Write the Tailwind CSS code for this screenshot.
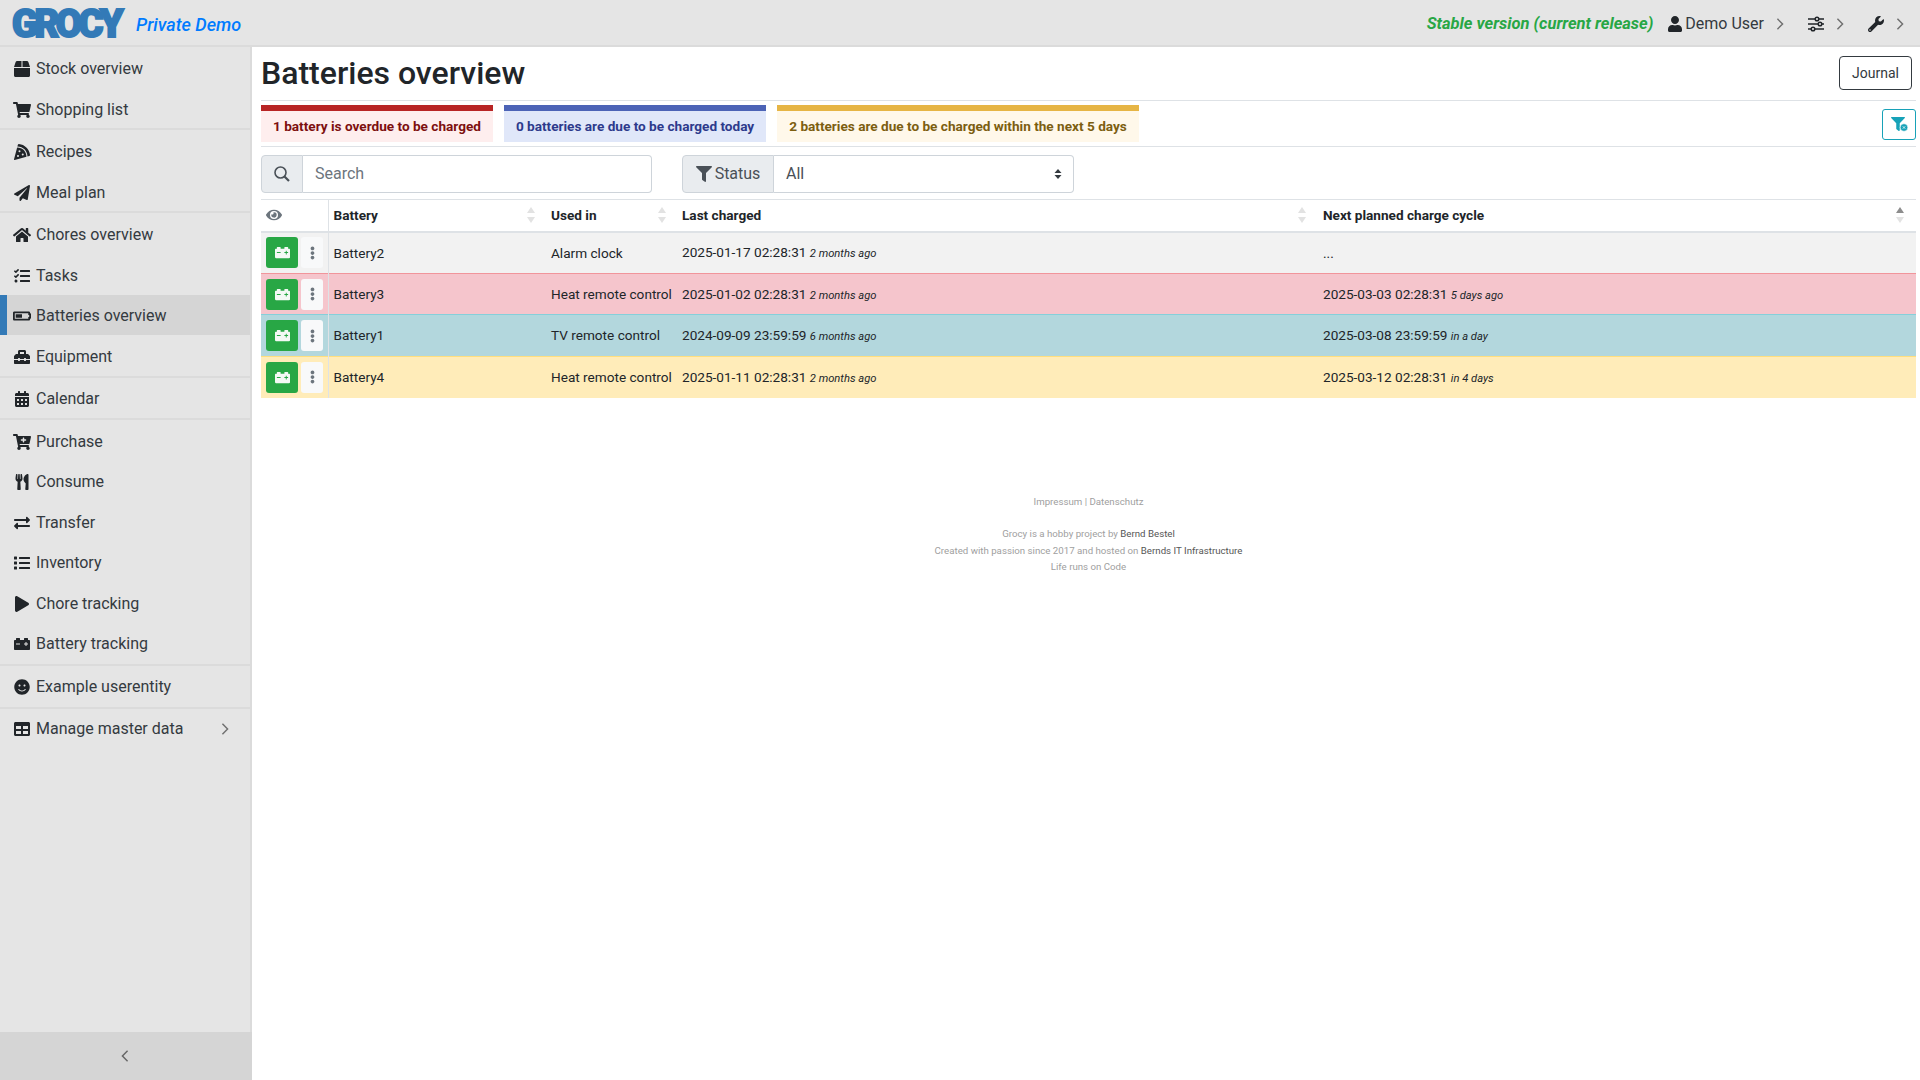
<!DOCTYPE html>
<html lang="en">
<head>
  <meta charset="UTF-8" />
  <title>Grocy - Batteries overview</title>
  <script src="https://cdn.jsdelivr.net/npm/@tailwindcss/browser@4"></script>
</head>
<body class="bg-white text-[#212529] overflow-hidden font-['Roboto',sans-serif]">

  <!-- icon sprite -->
  <svg class="hidden">
    <symbol id="i-box" viewBox="0 0 512 512"><path fill="currentColor" d="M509.5 184.6L458.9 32.8C452.4 13.2 434.1 0 413.4 0H272v192h238.7c-.4-2.5-.4-5-1.2-7.4zM240 0H98.6c-20.7 0-39 13.2-45.5 32.8L2.5 184.6c-.8 2.4-.8 4.9-1.2 7.4H240V0zM0 224v240c0 26.5 21.5 48 48 48h416c26.5 0 48-21.5 48-48V224H0z"/></symbol>
    <symbol id="i-cart" viewBox="0 0 576 512"><path fill="currentColor" d="M528.12 301.319l47.273-208C578.806 78.301 567.391 64 551.99 64H159.208l-9.166-44.81C147.758 8.021 137.93 0 126.529 0H24C10.745 0 0 10.745 0 24v16c0 13.255 10.745 24 24 24h69.883l70.248 343.435C147.325 417.1 136 435.222 136 456c0 30.928 25.072 56 56 56s56-25.072 56-56c0-15.674-6.447-29.835-16.824-40h209.647C430.447 426.165 424 440.326 424 456c0 30.928 25.072 56 56 56s56-25.072 56-56c0-22.172-12.888-41.332-31.579-50.405l5.517-24.276c3.413-15.018-8.002-29.319-23.403-29.319H218.117l-6.545-32h293.145c11.206 0 20.92-7.754 23.403-18.681z"/></symbol>
    <symbol id="i-pizza" viewBox="0 0 512 512"><path fill="currentColor" d="M158.87.15c-16.16-1.52-31.2 8.42-35.33 24.12l-14.81 56.27c187.62 5.49 314.54 130.61 322.48 317l56.94-15.78c15.72-4.36 25.49-19.68 23.62-35.9C490.89 165.08 340.78 17.32 158.87.15zm-58.47 112L.55 491.64a16.21 16.21 0 0 0 20 19.75l379-105.1c-4.27-174.89-123.08-292.14-299.15-294.1zM128 416a32 32 0 1 1 32-32 32 32 0 0 1-32 32zm48-152a32 32 0 1 1 32-32 32 32 0 0 1-32 32zm104 104a32 32 0 1 1 32-32 32 32 0 0 1-32 32z"/></symbol>
    <symbol id="i-plane" viewBox="0 0 512 512"><path fill="currentColor" d="M476 3.2L12.5 270.6c-18.1 10.4-15.8 35.6 2.2 43.2L121 358.4l287.3-253.2c5.5-4.9 13.3 2.6 8.6 8.3L176 407v80.5c0 23.6 28.5 32.9 42.5 15.8L282 426l124.6 52.2c14.2 6 30.4-2.9 33-18.2l72-432C515 7.8 493.3-6.8 476 3.2z"/></symbol>
    <symbol id="i-home" viewBox="0 0 576 512"><path fill="currentColor" d="M280.37 148.26L96 300.11V464a16 16 0 0 0 16 16l112.06-.29a16 16 0 0 0 15.92-16V368a16 16 0 0 1 16-16h64a16 16 0 0 1 16 16v95.64a16 16 0 0 0 16 16.05L464 480a16 16 0 0 0 16-16V300L295.67 148.26a12.19 12.19 0 0 0-15.3 0zM571.6 251.47L488 182.56V44.05a12 12 0 0 0-12-12h-56a12 12 0 0 0-12 12v72.61L318.47 43a48 48 0 0 0-61 0L4.34 251.47a12 12 0 0 0-1.6 16.9l25.5 31A12 12 0 0 0 45.15 301l235.22-193.74a12.19 12.19 0 0 1 15.3 0L530.9 301a12 12 0 0 0 16.9-1.6l25.5-31a12 12 0 0 0-1.7-16.93z"/></symbol>
    <symbol id="i-tasks" viewBox="0 0 512 512"><path fill="currentColor" d="M139.61 35.5a12 12 0 0 0-17 0L58.93 98.81l-22.7-22.12a12 12 0 0 0-17 0L3.53 92.41a12 12 0 0 0 0 17l47.59 47.4a12.78 12.78 0 0 0 17.61 0l15.59-15.62L156.52 69a12.09 12.09 0 0 0 .09-17zm0 159.19a12 12 0 0 0-17 0l-63.68 63.72-22.7-22.1a12 12 0 0 0-17 0L3.53 252a12 12 0 0 0 0 17L51 316.5a12.77 12.77 0 0 0 17.6 0l15.7-15.69 72.2-72.22a12 12 0 0 0 .09-16.9zM64 368c-26.49 0-48.59 21.5-48.59 48S37.53 464 64 464a48 48 0 0 0 0-96zm432 16H208a16 16 0 0 0-16 16v32a16 16 0 0 0 16 16h288a16 16 0 0 0 16-16v-32a16 16 0 0 0-16-16zm0-320H208a16 16 0 0 0-16 16v32a16 16 0 0 0 16 16h288a16 16 0 0 0 16-16V80a16 16 0 0 0-16-16zm0 160H208a16 16 0 0 0-16 16v32a16 16 0 0 0 16 16h288a16 16 0 0 0 16-16v-32a16 16 0 0 0-16-16z"/></symbol>
    <symbol id="i-battery-half" viewBox="0 0 640 512"><path fill="currentColor" d="M544 160v64h32v64h-32v64H64V160h480m16-64H48c-26.51 0-48 21.49-48 48v224c0 26.51 21.49 48 48 48h512c26.51 0 48-21.49 48-48v-16h8c13.255 0 24-10.745 24-24V184c0-13.255-10.745-24-24-24h-8v-16c0-26.51-21.49-48-48-48zm-240 96H96v128h224V192z"/></symbol>
    <symbol id="i-toolbox" viewBox="0 0 512 512"><path fill="currentColor" d="M502.63 214.63l-45.25-45.25c-6-6-14.14-9.37-22.63-9.37H384V80c0-26.51-21.49-48-48-48H176c-26.51 0-48 21.49-48 48v80H77.25c-8.49 0-16.62 3.37-22.63 9.37L9.37 214.63c-6 6-9.37 14.14-9.37 22.63V320h128v-16c0-8.84 7.16-16 16-16h32c8.84 0 16 7.16 16 16v16h128v-16c0-8.84 7.16-16 16-16h32c8.84 0 16 7.16 16 16v16h128v-82.75c0-8.48-3.37-16.62-9.37-22.62zM320 160H192V96h128v64zm64 208c0 8.84-7.16 16-16 16h-32c-8.84 0-16-7.16-16-16v-16H192v16c0 8.84-7.16 16-16 16h-32c-8.84 0-16-7.16-16-16v-16H0v96c0 17.67 14.33 32 32 32h448c17.67 0 32-14.33 32-32v-96H384v16z"/></symbol>
    <symbol id="i-calendar" viewBox="0 0 448 512"><path fill="currentColor" d="M0 464c0 26.5 21.5 48 48 48h352c26.5 0 48-21.5 48-48V192H0v272zm320-196c0-6.6 5.4-12 12-12h40c6.6 0 12 5.4 12 12v40c0 6.6-5.4 12-12 12h-40c-6.6 0-12-5.4-12-12v-40zm0 128c0-6.6 5.4-12 12-12h40c6.6 0 12 5.4 12 12v40c0 6.6-5.4 12-12 12h-40c-6.6 0-12-5.4-12-12v-40zM192 268c0-6.6 5.4-12 12-12h40c6.6 0 12 5.4 12 12v40c0 6.6-5.4 12-12 12h-40c-6.6 0-12-5.4-12-12v-40zm0 128c0-6.6 5.4-12 12-12h40c6.6 0 12 5.4 12 12v40c0 6.6-5.4 12-12 12h-40c-6.6 0-12-5.4-12-12v-40zM64 268c0-6.6 5.4-12 12-12h40c6.6 0 12 5.4 12 12v40c0 6.6-5.4 12-12 12H76c-6.6 0-12-5.4-12-12v-40zm0 128c0-6.6 5.4-12 12-12h40c6.6 0 12 5.4 12 12v40c0 6.6-5.4 12-12 12H76c-6.6 0-12-5.4-12-12v-40zM400 64h-48V16c0-8.8-7.2-16-16-16h-32c-8.8 0-16 7.2-16 16v48H160V16c0-8.8-7.2-16-16-16h-32c-8.8 0-16 7.2-16 16v48H48C21.5 64 0 85.5 0 112v48h448v-48c0-26.5-21.5-48-48-48z"/></symbol>
    <symbol id="i-cart-plus" viewBox="0 0 576 512"><path fill="currentColor" d="M504.717 320H211.572l6.545 32h268.418c15.401 0 26.816 14.301 23.403 29.319l-5.517 24.276C523.112 414.668 536 433.828 536 456c0 31.202-25.519 56.444-56.824 55.994-29.823-.429-54.35-24.631-55.155-54.447-.44-16.287 6.085-31.049 16.803-41.548H231.176C241.553 426.165 248 440.326 248 456c0 31.813-26.528 57.431-58.67 55.938-28.54-1.325-51.751-24.385-53.251-52.917-1.158-22.034 10.436-41.455 28.051-51.586L93.883 64H24C10.745 64 0 53.255 0 40V24C0 10.745 10.745 0 24 0h102.529c11.401 0 21.228 8.021 23.513 19.19L159.208 64H551.99c15.401 0 26.816 14.301 23.403 29.319l-47.273 208C525.637 312.246 515.923 320 504.717 320zM408 168h-48v-40c0-8.837-7.163-16-16-16h-16c-8.837 0-16 7.163-16 16v40h-48c-8.837 0-16 7.163-16 16v16c0 8.837 7.163 16 16 16h48v40c0 8.837 7.163 16 16 16h16c8.837 0 16-7.163 16-16v-40h48c8.837 0 16-7.163 16-16v-16c0-8.837-7.163-16-16-16z"/></symbol>
    <symbol id="i-utensils" viewBox="0 0 416 512"><path fill="currentColor" d="M207.9 15.2c.8 4.7 16.1 94.5 16.1 128.8 0 52.3-27.8 89.6-68.9 104.6L168 486.7c.7 13.7-10.2 25.3-24 25.3H80c-13.7 0-24.7-11.5-24-25.3l12.9-238.1C27.7 233.6 0 196.2 0 144 0 109.6 15.3 19.9 16.1 15.2 19.3-5.1 61.4-5.4 64 16.3v141.2c1.3 3.4 15.1 3.2 16 0 1.4-25.3 7.9-139.2 8-141.8 3.3-20.8 44.7-20.8 47.9 0 .2 2.7 6.6 116.5 8 141.8.9 3.2 14.8 3.4 16 0V16.3c2.6-21.6 44.8-21.4 48-1.1zm119.2 285.7l-15 185.1c-1.2 14 9.9 26 23.9 26h56c13.3 0 24-10.7 24-24V24c0-13.2-10.7-24-24-24-82.5 0-221.4 178.5-64.9 300.9z"/></symbol>
    <symbol id="i-exchange" viewBox="0 0 512 512"><path fill="currentColor" d="M0 168v-16c0-13.255 10.745-24 24-24h360V80c0-21.367 25.899-32.042 40.971-16.971l80 80c9.372 9.373 9.372 24.569 0 33.941l-80 80C409.956 271.982 384 261.456 384 240v-48H24c-13.255 0-24-10.745-24-24zm488 152H128v-48c0-21.314-25.862-32.08-40.971-16.971l-80 80c-9.372 9.373-9.372 24.569 0 33.941l80 80C102.057 463.997 128 453.437 128 432v-48h360c13.255 0 24-10.745 24-24v-16c0-13.255-10.745-24-24-24z"/></symbol>
    <symbol id="i-list" viewBox="0 0 512 512"><path fill="currentColor" d="M80 368H16a16 16 0 0 0-16 16v64a16 16 0 0 0 16 16h64a16 16 0 0 0 16-16v-64a16 16 0 0 0-16-16zm0-320H16A16 16 0 0 0 0 64v64a16 16 0 0 0 16 16h64a16 16 0 0 0 16-16V64a16 16 0 0 0-16-16zm0 160H16a16 16 0 0 0-16 16v64a16 16 0 0 0 16 16h64a16 16 0 0 0 16-16v-64a16 16 0 0 0-16-16zm416 176H176a16 16 0 0 0-16 16v32a16 16 0 0 0 16 16h320a16 16 0 0 0 16-16v-32a16 16 0 0 0-16-16zm0-320H176a16 16 0 0 0-16 16v32a16 16 0 0 0 16 16h320a16 16 0 0 0 16-16V80a16 16 0 0 0-16-16zm0 160H176a16 16 0 0 0-16 16v32a16 16 0 0 0 16 16h320a16 16 0 0 0 16-16v-32a16 16 0 0 0-16-16z"/></symbol>
    <symbol id="i-play" viewBox="0 0 448 512"><path fill="currentColor" d="M424.4 214.7L72.4 6.6C43.8-10.3 0 6.1 0 47.9V464c0 37.5 40.7 60.1 72.4 41.3l352-208c31.4-18.5 31.5-64.1 0-82.6z"/></symbol>
    <symbol id="i-car-battery" viewBox="0 0 512 512"><path fill="currentColor" d="M480 128h-32V80c0-8.84-7.16-16-16-16h-96c-8.84 0-16 7.16-16 16v48H192V80c0-8.84-7.16-16-16-16H80c-8.84 0-16 7.16-16 16v48H32c-17.67 0-32 14.33-32 32v256c0 17.67 14.33 32 32 32h448c17.67 0 32-14.33 32-32V160c0-17.67-14.33-32-32-32zM192 264c0 4.42-3.58 8-8 8H72c-4.42 0-8-3.58-8-8v-16c0-4.42 3.58-8 8-8h112c4.42 0 8 3.58 8 8v16zm256 0c0 4.42-3.58 8-8 8h-40v40c0 4.42-3.58 8-8 8h-16c-4.42 0-8-3.58-8-8v-40h-40c-4.42 0-8-3.58-8-8v-16c0-4.42 3.58-8 8-8h40v-40c0-4.42 3.58-8 8-8h16c4.42 0 8 3.58 8 8v40h40c4.42 0 8 3.58 8 8v16z"/></symbol>
    <symbol id="i-smile" viewBox="0 0 496 512"><path fill="currentColor" d="M248 8C111 8 0 119 0 256s111 248 248 248 248-111 248-248S385 8 248 8zm80 168c17.7 0 32 14.3 32 32s-14.3 32-32 32-32-14.3-32-32 14.3-32 32-32zm-160 0c17.7 0 32 14.3 32 32s-14.3 32-32 32-32-14.3-32-32 14.3-32 32-32zm194.8 170.2C334.3 380.4 292.5 400 248 400s-86.3-19.6-114.8-53.8c-13.6-16.3 11-36.7 24.6-20.5 22.4 26.9 55.2 42.2 90.2 42.2s67.8-15.4 90.2-42.2c13.4-16.2 38.1 4.2 24.6 20.5z"/></symbol>
    <symbol id="i-table" viewBox="0 0 512 512"><path fill="currentColor" d="M464 32H48C21.49 32 0 53.49 0 80v352c0 26.51 21.49 48 48 48h416c26.51 0 48-21.49 48-48V80c0-26.51-21.49-48-48-48zM224 416H64v-96h160v96zm0-160H64v-96h160v96zm224 160H288v-96h160v96zm0-160H288v-96h160v96z"/></symbol>
    <symbol id="i-user" viewBox="0 0 448 512"><path fill="currentColor" d="M224 256c70.7 0 128-57.3 128-128S294.7 0 224 0 96 57.3 96 128s57.3 128 128 128zm89.6 32h-16.7c-22.2 10.2-46.9 16-72.9 16s-50.6-5.8-72.9-16h-16.7C60.2 288 0 348.2 0 422.4V464c0 26.5 21.5 48 48 48h352c26.5 0 48-21.5 48-48v-41.6c0-74.2-60.2-134.4-134.4-134.4z"/></symbol>
    <symbol id="i-wrench" viewBox="0 0 512 512"><path fill="currentColor" d="M507.73 109.1c-2.24-9.03-13.54-12.09-20.12-5.51l-74.36 74.36-67.88-11.31-11.31-67.88 74.36-74.36c6.62-6.62 3.43-17.9-5.66-20.16-47.38-11.74-99.55.91-136.58 37.93-39.64 39.64-50.55 97.1-34.05 147.2L18.74 402.76c-24.99 24.99-24.99 65.51 0 90.5 24.99 24.99 65.51 24.99 90.5 0l213.21-213.21c50.12 16.71 107.47 5.68 147.37-34.22 37.07-37.07 49.7-89.32 37.91-136.73zM64 472c-13.25 0-24-10.75-24-24 0-13.26 10.75-24 24-24s24 10.74 24 24c0 13.25-10.75 24-24 24z"/></symbol>
    <symbol id="i-filter" viewBox="0 0 512 512"><path fill="currentColor" d="M487.976 0H24.028C2.71 0-8.047 25.866 7.058 40.971L192 225.941V432c0 7.831 3.821 15.17 10.237 19.662l80 55.98C298.02 518.69 320 507.493 320 487.98V225.941l184.947-184.97C520.021 25.896 509.338 0 487.976 0z"/></symbol>
    <symbol id="i-eye" viewBox="0 0 576 512"><path fill="currentColor" d="M572.52 241.4C518.29 135.59 410.93 64 288 64S57.68 135.64 3.48 241.41a32.35 32.35 0 0 0 0 29.19C57.71 376.41 165.07 448 288 448s230.32-71.64 284.52-177.41a32.35 32.35 0 0 0 0-29.19zM288 400a144 144 0 1 1 144-144 143.93 143.93 0 0 1-144 144zm0-240a95.31 95.31 0 0 0-25.31 3.79 47.85 47.85 0 0 1-66.9 66.9A95.78 95.78 0 1 0 288 160z"/></symbol>
    <symbol id="i-dots" viewBox="0 0 192 512"><path fill="currentColor" d="M96 184c39.8 0 72 32.2 72 72s-32.2 72-72 72-72-32.2-72-72 32.2-72 72-72zM24 80c0 39.8 32.2 72 72 72s72-32.2 72-72S135.8 8 96 8 24 40.2 24 80zm0 352c0 39.8 32.2 72 72 72s72-32.2 72-72-32.2-72-72-72-72 32.2-72 72z"/></symbol>
    <symbol id="i-right" viewBox="0 0 8 14"><path fill="none" stroke="currentColor" stroke-width="1.7" d="M1 1l6 6-6 6"/></symbol>
    <symbol id="i-sliders" viewBox="0 0 16 16"><g fill="none" stroke="currentColor" stroke-width="1.5"><path d="M0 3h16M0 8h16M0 13h16"/><circle cx="9" cy="3" r="1.8" fill="#e5e5e5"/><circle cx="12" cy="8" r="1.8" fill="#e5e5e5"/><circle cx="5" cy="13" r="1.8" fill="#e5e5e5"/></g></symbol>
    <symbol id="i-search" viewBox="0 0 16 16"><g fill="none" stroke="currentColor"><circle cx="6.5" cy="6.5" r="5.5" stroke-width="1.6"/><path d="M10.5 10.5L15 15" stroke-width="2.2"/></g></symbol>
    <symbol id="i-sort" viewBox="0 0 8 16"><path fill="#e2e2e2" d="M4 0l4 6H0zM4 16L0 10h8z"/></symbol>
    <symbol id="i-sort-asc" viewBox="0 0 8 16"><path fill="#8d8d8d" d="M4 0l4 6H0z"/><path fill="#e2e2e2" d="M4 16L0 10h8z"/></symbol>
  </svg>

  <!-- top bar -->
  <nav class="h-[47px] bg-[#e5e5e5] border-b-2 border-[#dbdbdb] flex items-center pt-[3px] pl-3 pr-4">
    <span class="w-[124px] text-[38px] leading-none font-black tracking-[-3.5px] text-[#337ab7] [-webkit-text-stroke:2px_#337ab7]">GROCY</span>
    <span class="text-[18px] font-medium italic text-[#007bff]">Private Demo</span>
    <div class="ml-auto flex items-center text-[16px]">
      <span class="italic font-bold text-[16.5px] text-[#28a745]">Stable version (current release)</span>
      <svg class="w-[14px] h-4 ml-[15px] text-[#212529]"><use href="#i-user"/></svg>
      <span class="ml-[3px] text-[#343a40]">Demo User</span>
      <svg class="w-2 h-3 ml-3 text-[#707070]"><use href="#i-right"/></svg>
      <svg class="w-4 h-4 ml-[24px] text-[#212529]"><use href="#i-sliders"/></svg>
      <svg class="w-2 h-3 ml-3 text-[#707070]"><use href="#i-right"/></svg>
      <svg class="w-4 h-4 ml-[24px] text-[#212529]"><use href="#i-wrench"/></svg>
      <svg class="w-2 h-3 ml-3 text-[#707070]"><use href="#i-right"/></svg>
    </div>
  </nav>

  <div class="flex h-[1033px]">
    <!-- sidebar -->
    <aside class="w-[252px] shrink-0 bg-[#e5e5e5] border-r-2 border-[#dbdbdb] flex flex-col text-[16px] text-[#343a40]">
      <div class="border-b-2 border-[#dbdbdb]">
        <a class="h-[40.6px] pt-1 pl-[14px] flex items-center"><svg class="w-4 h-4 mr-[6px] text-[#212529]"><use href="#i-box"/></svg>Stock overview</a>
        <a class="h-[40.6px] pt-1 pl-[13px] flex items-center"><svg class="w-[18px] h-4 mr-[5px] text-[#212529]"><use href="#i-cart"/></svg>Shopping list</a>
      </div>
      <div class="border-b-2 border-[#dbdbdb]">
        <a class="h-[40.6px] pt-[3px] pl-[14px] flex items-center"><svg class="w-4 h-4 mr-[6px] text-[#212529]"><use href="#i-pizza"/></svg>Recipes</a>
        <a class="h-[40.6px] pt-[3px] pl-[14px] flex items-center"><svg class="w-4 h-4 mr-[6px] text-[#212529]"><use href="#i-plane"/></svg>Meal plan</a>
      </div>
      <div class="border-b-2 border-[#dbdbdb]">
        <a class="h-[40.6px] pt-[3px] pl-[13px] flex items-center"><svg class="w-[18px] h-4 mr-[5px] text-[#212529]"><use href="#i-home"/></svg>Chores overview</a>
        <a class="h-[40.6px] pt-[3px] pl-[14px] flex items-center"><svg class="w-4 h-4 mr-[6px] text-[#212529]"><use href="#i-tasks"/></svg>Tasks</a>
        <a class="h-[40.6px] pt-[2px] pl-[6px] flex items-center bg-[#d5d5d5] border-l-[7px] border-[#337ab7]"><svg class="w-[18px] h-4 mr-[5px] text-[#212529]"><use href="#i-battery-half"/></svg>Batteries overview</a>
        <a class="h-[40.6px] pt-[3px] pl-[14px] flex items-center"><svg class="w-4 h-4 mr-[6px] text-[#212529]"><use href="#i-toolbox"/></svg>Equipment</a>
      </div>
      <div class="border-b-2 border-[#dbdbdb]">
        <a class="h-[40.6px] pt-[2px] pl-[15px] flex items-center"><svg class="w-[14px] h-4 mr-[7px] text-[#212529]"><use href="#i-calendar"/></svg>Calendar</a>
      </div>
      <div class="border-b-2 border-[#dbdbdb]">
        <a class="h-[40.6px] pt-[2px] pl-[13px] flex items-center"><svg class="w-[18px] h-4 mr-[5px] text-[#212529]"><use href="#i-cart-plus"/></svg>Purchase</a>
        <a class="h-[40.6px] pt-[2px] pl-[15px] flex items-center"><svg class="w-[14px] h-4 mr-[7px] text-[#212529]"><use href="#i-utensils"/></svg>Consume</a>
        <a class="h-[40.6px] pt-[2px] pl-[14px] flex items-center"><svg class="w-4 h-4 mr-[6px] text-[#212529]"><use href="#i-exchange"/></svg>Transfer</a>
        <a class="h-[40.6px] pt-[2px] pl-[14px] flex items-center"><svg class="w-4 h-4 mr-[6px] text-[#212529]"><use href="#i-list"/></svg>Inventory</a>
        <a class="h-[40.6px] pt-[2px] pl-[15px] flex items-center"><svg class="w-[14px] h-4 mr-[7px] text-[#212529]"><use href="#i-play"/></svg>Chore tracking</a>
        <a class="h-[40.6px] pl-[14px] flex items-center"><svg class="w-4 h-4 mr-[6px] text-[#212529]"><use href="#i-car-battery"/></svg>Battery tracking</a>
      </div>
      <div class="border-b-2 border-[#dbdbdb]">
        <a class="h-[40.6px] pt-[2px] pl-[14px] flex items-center"><svg class="w-4 h-4 mr-[6px] text-[#212529]"><use href="#i-smile"/></svg>Example userentity</a>
      </div>
      <a class="h-[40.6px] pl-[14px] pr-[21px] flex items-center"><svg class="w-4 h-4 mr-[6px] text-[#212529]"><use href="#i-table"/></svg>Manage master data<svg class="w-2 h-3 ml-auto text-[#707070]"><use href="#i-right"/></svg></a>
      <div class="mt-auto h-[48px] -mr-[2px] pr-[2px] bg-[#d5d5d5] flex items-center justify-center">
        <svg class="w-2 h-3 rotate-180 text-[#666]"><use href="#i-right"/></svg>
      </div>
    </aside>

    <!-- content -->
    <main class="flex-1 min-w-0 pl-[9px] pr-1">
      <div class="flex items-center justify-between h-[54px] border-b border-[#dee2e6]">
        <h2 class="text-[32px] font-medium leading-none mt-[-1px]">Batteries overview</h2>
        <button class="w-[73px] h-[34px] mr-1 mt-[-1px] border border-[#343a40] rounded text-[14px] text-[#343a40]">Journal</button>
      </div>

      <div class="flex items-start h-[46px] pt-1 border-b border-[#dee2e6] text-[13.6px] font-bold">
        <div class="h-[37px] px-3 border-t-[6px] border-[#b82525] bg-[#feeeee] text-[#7d0f0f] flex items-center">1 battery is overdue to be charged</div>
        <div class="h-[37px] ml-[11px] px-3 border-t-[6px] border-[#4c63b6] bg-[#e0e7f9] text-[#2d3a8c] flex items-center">0 batteries are due to be charged today</div>
        <div class="h-[37px] ml-[11px] px-3 border-t-[6px] border-[#e6b545] bg-[#fff8ea] text-[#7c5e10] flex items-center">2 batteries are due to be charged within the next 5 days</div>
        <button class="ml-auto mt-1 w-[34px] h-[31px] border border-[#17a2b8] rounded-[3px] flex items-center justify-center text-[#17a2b8]">
          <svg class="w-[17px] h-[15px]" viewBox="0 0 17 15"><use href="#i-filter" width="14" height="14"/><circle cx="13" cy="10.5" r="3.8" fill="currentColor" stroke="#fff" stroke-width="0.6"/><path d="M11.8 9.3l2.4 2.4m0-2.4l-2.4 2.4" stroke="#fff" stroke-width="0.8"/></svg>
        </button>
      </div>

      <div class="flex h-[52px] pt-2 text-[16px]">
        <div class="flex h-[38px] w-[391px]">
          <span class="w-[42px] bg-[#e9ecef] border border-[#ced4da] rounded-l flex items-center justify-center text-[#495057]"><svg class="w-4 h-4"><use href="#i-search"/></svg></span>
          <span class="flex-1 border border-l-0 border-[#ced4da] rounded-r pl-3 flex items-center text-[#6c757d]">Search</span>
        </div>
        <div class="flex h-[38px] w-[392px] ml-[30px]">
          <span class="w-[92px] bg-[#e9ecef] border border-[#ced4da] rounded-l flex items-center justify-center text-[#495057]"><svg class="w-4 h-4 mr-[3px]"><use href="#i-filter"/></svg>Status</span>
          <span class="flex-1 border border-l-0 border-[#ced4da] rounded-r pl-3 pr-[11px] flex items-center justify-between text-[#495057]">All
            <svg class="w-2 h-[10px]" viewBox="0 0 8 10"><path fill="#343a40" d="M4 0l3.5 4H.5zM4 10L.5 6h7z"/></svg>
          </span>
        </div>
      </div>

      <table class="w-[1655px] table-fixed border-collapse text-[13.6px]">
        <colgroup>
          <col class="w-[67px]"><col class="w-[218px]"><col class="w-[131px]"><col class="w-[640px]"><col>
        </colgroup>
        <thead>
          <tr class="h-[32px] border-t border-b-2 border-t-[#dee2e6] border-b-[#dee2e6]">
            <th class="border-r border-[#dee2e6] pl-[5px] text-left"><svg class="w-4 h-4 text-[#6c757d]"><use href="#i-eye"/></svg></th>
            <th class="pl-[5px] pr-[11px] font-bold"><div class="flex items-center justify-between">Battery<svg class="w-2 h-4"><use href="#i-sort"/></svg></div></th>
            <th class="pl-[5px] pr-[11px] font-bold"><div class="flex items-center justify-between">Used in<svg class="w-2 h-4"><use href="#i-sort"/></svg></div></th>
            <th class="pl-[5px] pr-[11px] font-bold"><div class="flex items-center justify-between">Last charged<svg class="w-2 h-4"><use href="#i-sort"/></svg></div></th>
            <th class="pl-[6px] pr-3 font-bold"><div class="flex items-center justify-between">Next planned charge cycle<svg class="w-2 h-4"><use href="#i-sort-asc"/></svg></div></th>
          </tr>
        </thead>
        <tbody>
          <tr class="h-[42px] bg-[#f2f2f2]">
            <td class="border-r border-[#dee2e6] pl-[5px]"><div class="flex gap-[3px]"><a class="w-[32px] h-[31px] bg-[#28a745] rounded-[3px] flex items-center justify-center text-[#f4f9f5]"><svg class="w-[15px] h-[15px]"><use href="#i-car-battery"/></svg></a><a class="w-[22px] h-[31px] bg-[#f8f9fa] rounded-[3px] flex items-center justify-center text-[#6c757d]"><svg class="w-[5px] h-[14px]"><use href="#i-dots"/></svg></a></div></td>
            <td class="pl-[5px]">Battery2</td>
            <td class="pl-[5px] whitespace-nowrap">Alarm clock</td>
            <td class="pl-[5px] whitespace-nowrap">2025-01-17 02:28:31 <i class="text-[11.2px]">2 months ago</i></td>
            <td class="pl-[6px]">...</td>
          </tr>
          <tr class="h-[41px] bg-[#f5c5cc] border-t border-[#f1959b]">
            <td class="border-r border-[#dee2e6] pl-[5px]"><div class="flex gap-[3px]"><a class="w-[32px] h-[31px] bg-[#28a745] rounded-[3px] flex items-center justify-center text-[#f4f9f5]"><svg class="w-[15px] h-[15px]"><use href="#i-car-battery"/></svg></a><a class="w-[22px] h-[31px] bg-[#f8f9fa] rounded-[3px] flex items-center justify-center text-[#6c757d]"><svg class="w-[5px] h-[14px]"><use href="#i-dots"/></svg></a></div></td>
            <td class="pl-[5px]">Battery3</td>
            <td class="pl-[5px] whitespace-nowrap">Heat remote control</td>
            <td class="pl-[5px] whitespace-nowrap">2025-01-02 02:28:31 <i class="text-[11.2px]">2 months ago</i></td>
            <td class="pl-[6px]">2025-03-03 02:28:31 <i class="text-[11.2px]">5 days ago</i></td>
          </tr>
          <tr class="h-[42px] bg-[#b3d7dd] border-t border-[#86cfda]">
            <td class="border-r border-[#dee2e6] pl-[5px]"><div class="flex gap-[3px]"><a class="w-[32px] h-[31px] bg-[#28a745] rounded-[3px] flex items-center justify-center text-[#f4f9f5]"><svg class="w-[15px] h-[15px]"><use href="#i-car-battery"/></svg></a><a class="w-[22px] h-[31px] bg-[#f8f9fa] rounded-[3px] flex items-center justify-center text-[#6c757d]"><svg class="w-[5px] h-[14px]"><use href="#i-dots"/></svg></a></div></td>
            <td class="pl-[5px]">Battery1</td>
            <td class="pl-[5px] whitespace-nowrap">TV remote control</td>
            <td class="pl-[5px] whitespace-nowrap">2024-09-09 23:59:59 <i class="text-[11.2px]">6 months ago</i></td>
            <td class="pl-[6px]">2025-03-08 23:59:59 <i class="text-[11.2px]">in a day</i></td>
          </tr>
          <tr class="h-[41px] bg-[#ffecb9] border-t border-[#ffdf7e]">
            <td class="border-r border-[#dee2e6] pl-[5px]"><div class="flex gap-[3px]"><a class="w-[32px] h-[31px] bg-[#28a745] rounded-[3px] flex items-center justify-center text-[#f4f9f5]"><svg class="w-[15px] h-[15px]"><use href="#i-car-battery"/></svg></a><a class="w-[22px] h-[31px] bg-[#f8f9fa] rounded-[3px] flex items-center justify-center text-[#6c757d]"><svg class="w-[5px] h-[14px]"><use href="#i-dots"/></svg></a></div></td>
            <td class="pl-[5px]">Battery4</td>
            <td class="pl-[5px] whitespace-nowrap">Heat remote control</td>
            <td class="pl-[5px] whitespace-nowrap">2025-01-11 02:28:31 <i class="text-[11.2px]">2 months ago</i></td>
            <td class="pl-[6px]">2025-03-12 02:28:31 <i class="text-[11.2px]">in 4 days</i></td>
          </tr>
        </tbody>
      </table>

      <footer class="w-[1655px] mt-[96px] text-center text-[9.7px] leading-[16.5px] text-[#a0a0a0]">
        <p class="mb-4">Impressum | Datenschutz</p>
        <p>Grocy is a hobby project by <span class="text-[#555]">Bernd Bestel</span></p>
        <p>Created with passion since 2017 and hosted on <span class="text-[#555]">Bernds IT Infrastructure</span></p>
        <p>Life runs on Code</p>
      </footer>
    </main>
  </div>
</body>
</html>
